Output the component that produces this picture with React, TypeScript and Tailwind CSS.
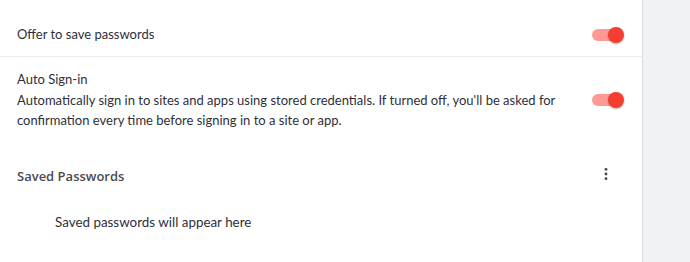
import React from "react";

function Toggle() {
  return (
    <div className="relative w-[34px] h-[18px] flex items-center shrink-0">
      <div className="w-[26px] h-[12px] ml-[2px] rounded-full bg-[#fe9a93]" />
      <div className="absolute right-0 top-[1px] w-[16px] h-[16px] rounded-full bg-[#f53d32] shadow-[0_1px_2px_rgba(0,0,0,0.3)]" />
    </div>
  );
}

export default function App() {
  return (
    <div
      className="w-[690px] h-[262px] flex bg-[#f1f2f4] overflow-hidden"
      style={{ fontFamily: "Lato, 'Noto Sans', sans-serif" }}
    >
      <div className="w-[643px] h-full bg-white border-r border-[#dcdcdc] text-[#2f2f3a] text-[13px]">
        <div className="h-[57px] flex items-center justify-between pl-[17px] pr-[18px] pt-[13px] border-b border-[#ececec]">
          <span>Offer to save passwords</span>
          <Toggle />
        </div>
        <div className="flex items-center justify-between pl-[17px] pr-[18px] pt-[12px]">
          <div className="leading-[20px]">
            <div className="mb-[1px]">Auto Sign-in</div>
            <div>
              Automatically sign in to sites and apps using stored credentials. If turned off, you'll be asked for
              <br />
              confirmation every time before signing in to a site or app.
            </div>
          </div>
          <Toggle />
        </div>
        <div className="flex items-center justify-between pl-[17px] pr-[34px] mt-[37px]">
          <span className="font-semibold text-[#4a4a52]" style={{ fontFamily: "'Open Sans', sans-serif" }}>
            Saved Passwords
          </span>
          <svg width="4" height="14" viewBox="0 0 4 14" fill="#44444c" className="-mt-[6px]">
            <circle cx="2" cy="2.3" r="1.4" />
            <circle cx="2" cy="7" r="1.4" />
            <circle cx="2" cy="11.7" r="1.4" />
          </svg>
        </div>
        <div className="pl-[55px] mt-[25px] text-[13.4px]">Saved passwords will appear here</div>
      </div>
    </div>
  );
}
